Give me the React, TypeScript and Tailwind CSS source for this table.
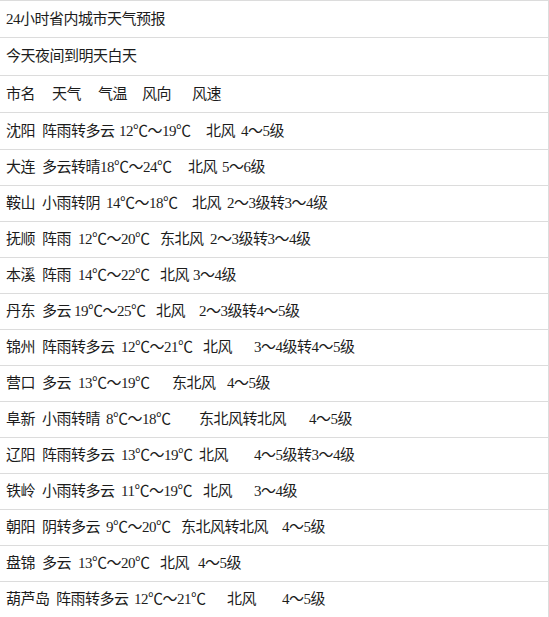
type Seg = [string, string]

const header: Seg[] = [
  ['市名', 'w-[46px]'],
  ['天气', 'w-[46px]'],
  ['气温', 'w-[44px]'],
  ['风向', 'w-[50px]'],
  ['风速', ''],
]

const cities: Seg[][] = [
  [['沈阳', 'w-[36px]'], ['阵雨转多云', 'w-[77px]'], ['12℃～19℃', 'w-[87px]'], ['北风', 'w-[35px]'], ['4～5级', '']],
  [['大连', 'w-[36px]'], ['多云转晴', 'w-[58px]'], ['18℃～24℃', 'w-[88px]'], ['北风', 'w-[34px]'], ['5～6级', '']],
  [['鞍山', 'w-[36px]'], ['小雨转阴', 'w-[64px]'], ['14℃～18℃', 'w-[86px]'], ['北风', 'w-[35px]'], ['2～3级转3～4级', '']],
  [['抚顺', 'w-[36px]'], ['阵雨', 'w-[36px]'], ['12℃～20℃', 'w-[82px]'], ['东北风', 'w-[50px]'], ['2～3级转3～4级', '']],
  [['本溪', 'w-[36px]'], ['阵雨', 'w-[36px]'], ['14℃～22℃', 'w-[82px]'], ['北风', 'w-[33px]'], ['3～4级', '']],
  [['丹东', 'w-[36px]'], ['多云', 'w-[32px]'], ['19℃～25℃', 'w-[82px]'], ['北风', 'w-[43px]'], ['2～3级转4～5级', '']],
  [['锦州', 'w-[36px]'], ['阵雨转多云', 'w-[79px]'], ['12℃～21℃', 'w-[82px]'], ['北风', 'w-[51px]'], ['3～4级转4～5级', '']],
  [['营口', 'w-[36px]'], ['多云', 'w-[36px]'], ['13℃～19℃', 'w-[94px]'], ['东北风', 'w-[55px]'], ['4～5级', '']],
  [['阜新', 'w-[36px]'], ['小雨转晴', 'w-[64px]'], ['8℃～18℃', 'w-[93px]'], ['东北风转北风', 'w-[110px]'], ['4～5级', '']],
  [['辽阳', 'w-[36px]'], ['阵雨转多云', 'w-[79px]'], ['13℃～19℃', 'w-[78px]'], ['北风', 'w-[55px]'], ['4～5级转3～4级', '']],
  [['铁岭', 'w-[36px]'], ['小雨转多云', 'w-[79px]'], ['11℃～19℃', 'w-[82px]'], ['北风', 'w-[51px]'], ['3～4级', '']],
  [['朝阳', 'w-[36px]'], ['阴转多云', 'w-[64px]'], ['9℃～20℃', 'w-[75px]'], ['东北风转北风', 'w-[101px]'], ['4～5级', '']],
  [['盘锦', 'w-[36px]'], ['多云', 'w-[36px]'], ['13℃～20℃', 'w-[82px]'], ['北风', 'w-[38px]'], ['4～5级', '']],
  [['葫芦岛', 'w-[50px]'], ['阵雨转多云', 'w-[78px]'], ['12℃～21℃', 'w-[93px]'], ['北风', 'w-[55px]'], ['4～5级', '']],
]

function Row({ segs, h }: { segs: Seg[]; h: string }) {
  return (
    <div className={`flex items-center border-b border-[#dcdcdc] pl-[6px] ${h}`}>
      {segs.map(([text, w], i) => (
        <span key={i} className={`shrink-0 whitespace-nowrap ${w}`}>
          {text}
        </span>
      ))}
    </div>
  )
}

export default function App() {
  return (
    <div
      className="w-[549px] h-[617px] overflow-hidden bg-white text-[#1c1c1c] text-[15px] tracking-[-0.5px] border-t border-r border-[#dcdcdc]"
      style={{ fontFamily: '"Liberation Serif", "Noto Sans CJK SC", serif' }}
    >
      <Row segs={[['24小时省内城市天气预报', '']]} h="h-[37px]" />
      <Row segs={[['今天夜间到明天白天', '']]} h="h-[38px]" />
      <Row segs={header} h="h-[37px]" />
      {cities.map((segs, i) => (
        <Row key={i} segs={segs} h={i === 0 ? 'h-[37px]' : 'h-[36px]'} />
      ))}
    </div>
  )
}
